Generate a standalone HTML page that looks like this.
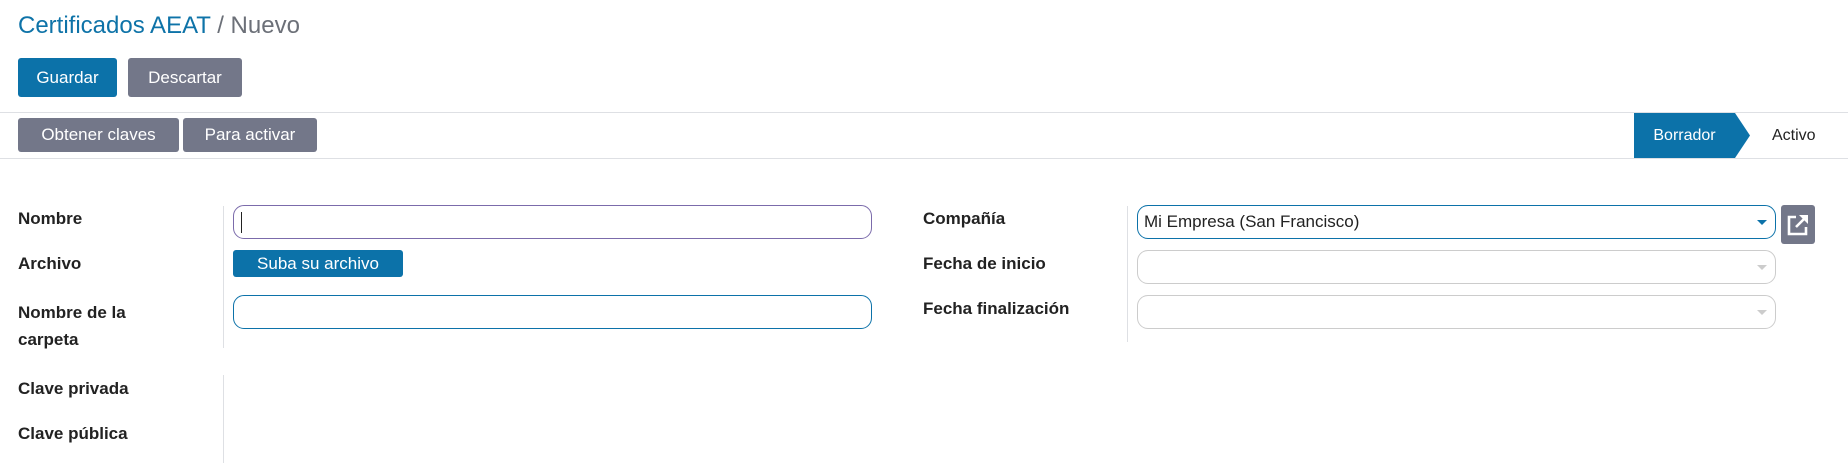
<!DOCTYPE html>
<html><head><meta charset="utf-8"><style>
*{box-sizing:border-box;margin:0;padding:0}
body{width:1848px;height:475px;background:#fff;font-family:"Liberation Sans",sans-serif;color:#222;position:relative;overflow:hidden}
.a{position:absolute}
.title{left:18px;top:12px;font-size:24px;color:#0e73a8;white-space:nowrap}
.title span{color:#6c7078}
.btn{position:absolute;color:#fff;font-size:17px;border-radius:3px;display:flex;align-items:center;justify-content:center}
.blue{background:#0c72a9}
.grey{background:#737789}
.hr{position:absolute;left:0;width:1848px;height:1px;background:#dee0e4}
.lbl{position:absolute;font-weight:bold;font-size:17px;color:#222}
.vs{position:absolute;width:1px;background:#dee0e4}
.inp{position:absolute;border:1px solid #0c72a9;border-radius:11px;height:34px}
.g{border-color:#ccc}
.arr{position:absolute;right:8px;top:14px;width:0;height:0;border-left:5px solid transparent;border-right:5px solid transparent;border-top:5px solid #0c72a9}
</style></head><body>
<div class="a title">Certificados AEAT <span>/ Nuevo</span></div>
<div class="btn blue" style="left:18px;top:58px;width:99px;height:39px">Guardar</div>
<div class="btn grey" style="left:128px;top:58px;width:114px;height:39px">Descartar</div>
<div class="hr" style="top:112px"></div>
<div class="btn grey" style="left:18px;top:118px;width:161px;height:34px">Obtener claves</div>
<div class="btn grey" style="left:183px;top:118px;width:134px;height:34px">Para activar</div>
<div class="hr" style="top:158px"></div>
<svg class="a" style="left:1634px;top:113px" width="117" height="45"><polygon points="0,0 101,0 116,22.5 101,45 0,45" fill="#0c72a9"/></svg>
<div class="a" style="left:1634px;top:113px;width:101px;height:45px;color:#fff;font-size:16px;display:flex;align-items:center;justify-content:center">Borrador</div>
<div class="a" style="left:1772px;top:127px;font-size:16px;color:#222">Activo</div>

<div class="lbl" style="left:18px;top:209px">Nombre</div>
<div class="lbl" style="left:18px;top:254px">Archivo</div>
<div class="lbl" style="left:18px;top:299px;line-height:27px">Nombre de la<br>carpeta</div>
<div class="lbl" style="left:18px;top:379px">Clave privada</div>
<div class="lbl" style="left:18px;top:424px">Clave pública</div>
<div class="vs" style="left:223px;top:206px;height:142px"></div>
<div class="vs" style="left:223px;top:375px;height:88px"></div>
<div class="inp" style="left:233px;top:205px;width:639px;border-color:#7b6bab"><div class="a" style="left:7px;top:6px;width:1px;height:21px;background:#222"></div></div>
<div class="btn blue" style="left:233px;top:250px;width:170px;height:27px;font-size:17px">Suba su archivo</div>
<div class="inp" style="left:233px;top:295px;width:639px"></div>

<div class="lbl" style="left:923px;top:209px">Compañía</div>
<div class="lbl" style="left:923px;top:254px">Fecha de inicio</div>
<div class="lbl" style="left:923px;top:299px">Fecha finalización</div>
<div class="vs" style="left:1127px;top:206px;height:136px"></div>
<div class="inp" style="left:1137px;top:205px;width:639px"><div class="a" style="left:6px;top:6px;font-size:17px;color:#222">Mi Empresa (San Francisco)</div><div class="arr"></div></div>
<div class="inp g" style="left:1137px;top:250px;width:639px"><div class="arr" style="border-top-color:#ccc"></div></div>
<div class="inp g" style="left:1137px;top:295px;width:639px"><div class="arr" style="border-top-color:#ccc"></div></div>
<div class="btn grey" style="left:1781px;top:205px;width:34px;height:39px">
<svg width="26" height="26" viewBox="0 0 26 26" fill="none" stroke="#fff" stroke-width="2.6"><path d="M11 5H4v17h17v-7"/><path d="M11 15L21 5"/><polygon points="14,3 23,3 23,12" fill="#fff" stroke="none"/></svg></div>
</body></html>
